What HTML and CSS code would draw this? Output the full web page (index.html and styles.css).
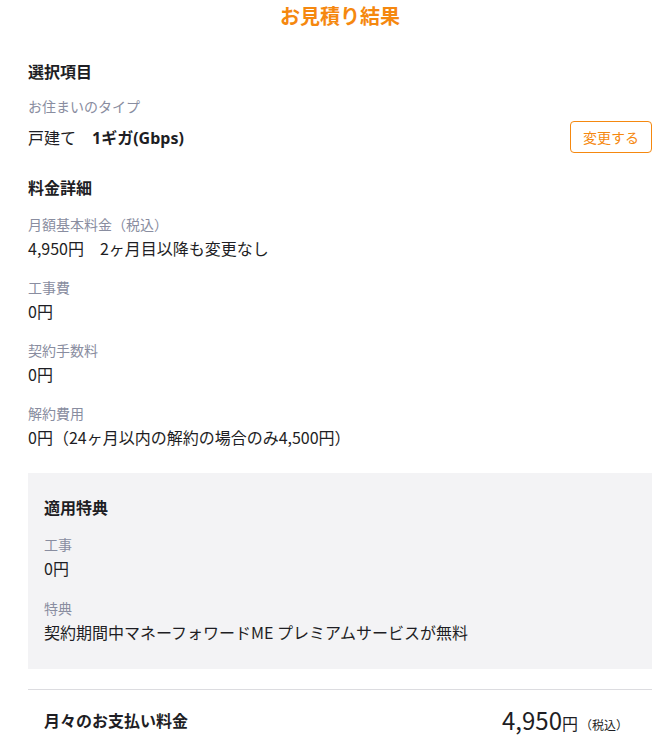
FILE: index.html
```html
<!DOCTYPE html>
<html lang="ja">
<head>
<meta charset="utf-8">
<title>お見積り結果</title>
<link rel="stylesheet" href="styles.css">
</head>
<body>
<main class="page">
  <h1 class="title">お見積り結果</h1>

  <section class="section">
    <h2 class="section-title">選択項目</h2>
    <div class="label">お住まいのタイプ</div>
    <div class="select-row">
      <div class="value">戸建て<span class="plan">1ギガ(Gbps)</span></div>
      <button class="change-btn" type="button">変更する</button>
    </div>
  </section>

  <section class="section section-fees">
    <h2 class="section-title">料金詳細</h2>
    <div class="item">
      <div class="label">月額基本料金（税込）</div>
      <div class="value">4,950円　2ヶ月目以降も変更なし</div>
    </div>
    <div class="item">
      <div class="label">工事費</div>
      <div class="value">0円</div>
    </div>
    <div class="item">
      <div class="label">契約手数料</div>
      <div class="value">0円</div>
    </div>
    <div class="item">
      <div class="label">解約費用</div>
      <div class="value">0円（24ヶ月以内の解約の場合のみ4,500円）</div>
    </div>
  </section>

  <section class="benefit-box">
    <h2 class="section-title">適用特典</h2>
    <div class="item">
      <div class="label">工事</div>
      <div class="value">0円</div>
    </div>
    <div class="item">
      <div class="label">特典</div>
      <div class="value">契約期間中マネーフォワードME プレミアムサービスが無料</div>
    </div>
  </section>

  <div class="total-row">
    <div class="total-label">月々のお支払い料金</div>
    <div class="total-price"><span class="total-num">4,950</span><span class="total-yen">円</span><span class="total-tax">（税込）</span></div>
  </div>
</main>
</body>
</html>
```

FILE: styles.css
```css
* { box-sizing: border-box; }

html, body {
  margin: 0;
  padding: 0;
  background: #ffffff;
}

body {
  font-family: "Noto Sans CJK JP", "Noto Sans", sans-serif;
  color: #1e1e24;
}

.page {
  padding: 0 14px 0 28px;
}

.title {
  margin: 0;
  font-size: 20px;
  line-height: 32px;
  font-weight: 700;
  color: #f5880f;
  text-align: center;
}

.section-title {
  margin: 0 0 15px;
  font-size: 16px;
  line-height: 24px;
  font-weight: 700;
  color: #1e1e24;
}

.section {
  margin-top: 27px;
}

.section .section-title {
  margin-bottom: 13px;
}

.section-fees {
  margin-top: 22px;
}

.section-fees .section-title {
  margin-bottom: 15px;
}

.label {
  font-size: 14px;
  line-height: 20px;
  color: #898da0;
}

.value {
  margin-top: 2px;
  font-size: 16px;
  line-height: 24px;
  color: #1e1e24;
}

.item + .item {
  margin-top: 17px;
}

.select-row {
  margin-top: 5px;
  display: flex;
  align-items: center;
  justify-content: space-between;
  height: 32px;
}

.select-row .value {
  margin-top: 0;
}

.plan {
  margin-left: 16px;
  font-family: "Noto Sans", "Noto Sans CJK JP", sans-serif;
  font-weight: 700;
}

.change-btn {
  height: 32px;
  padding: 0 12px;
  border: 1px solid #f5880f;
  border-radius: 4px;
  background: #ffffff;
  color: #f5880f;
  font-family: inherit;
  font-size: 14px;
  line-height: 20px;
  cursor: pointer;
}

.benefit-box {
  margin-top: 24px;
  padding: 22px 16px 25px;
  background: #f3f3f5;
}

.benefit-box .item + .item {
  margin-top: 18px;
}

.total-row {
  margin-top: 20px;
  border-top: 1px solid #dcdce0;
  display: flex;
  align-items: center;
  justify-content: space-between;
  padding: 0 24px 0 16px;
  height: 61px;
}

.total-label {
  font-size: 16px;
  line-height: 24px;
  font-weight: 700;
}

.total-price {
  display: flex;
  align-items: baseline;
}

.total-num {
  font-size: 24px;
  line-height: 32px;
}

.total-yen {
  font-size: 16px;
}

.total-tax {
  margin-left: 2px;
  font-size: 12px;
}
```
